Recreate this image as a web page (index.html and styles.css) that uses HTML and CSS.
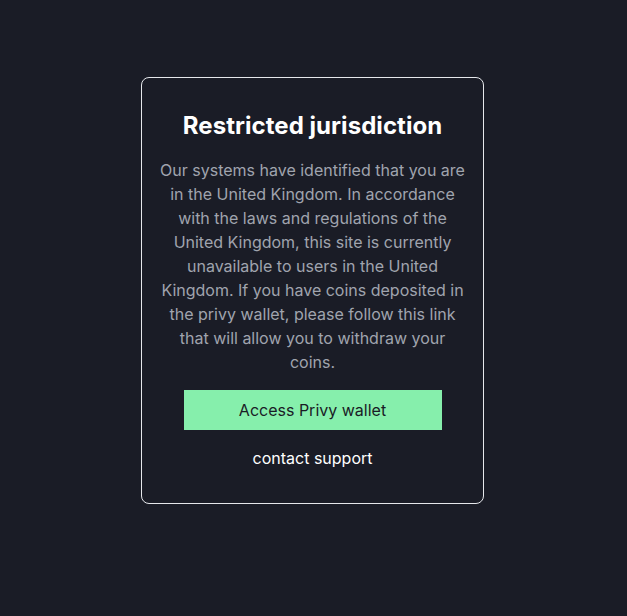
FILE: index.html
```html
<!DOCTYPE html>
<html lang="en">
<head>
<meta charset="utf-8">
<title>Restricted jurisdiction</title>
<link rel="stylesheet" href="styles.css">
</head>
<body>
<main class="page">
  <section class="card">
    <h1 class="title">Restricted jurisdiction</h1>
    <p class="message">Our systems have identified that you are in the United Kingdom. In accordance with the laws and regulations of the United Kingdom, this site is currently unavailable to users in the United Kingdom. If you have coins deposited in the privy wallet, please follow this link that will allow you to withdraw your coins.</p>
    <a class="btn" href="#">Access Privy wallet</a>
    <a class="support" href="#">contact support</a>
  </section>
</main>
</body>
</html>
```

FILE: styles.css
```css
* { box-sizing: border-box; }
html, body {
  margin: 0;
  padding: 0;
  background: #1a1c26;
  font-family: Inter, "Noto Sans", sans-serif;
}
.page {
  min-height: 616px;
  display: flex;
  justify-content: center;
  align-items: flex-start;
  padding-top: 77px;
  padding-right: 2px;
}
.card {
  width: 343px;
  border: 1px solid #e5e7eb;
  border-radius: 8px;
  padding: 32px 16px 33px;
  display: flex;
  flex-direction: column;
  align-items: center;
  gap: 16px;
  text-align: center;
}
.title {
  margin: 0;
  font-size: 24px;
  line-height: 32px;
  font-weight: 700;
  letter-spacing: 0.05px;
  color: #ffffff;
}
.message {
  margin: 0;
  font-size: 16px;
  line-height: 24px;
  color: #a0a4ae;
}
.btn {
  display: block;
  width: 258px;
  height: 40px;
  line-height: 40px;
  background: #86efac;
  color: #1a1c26;
  font-size: 16px;
  text-decoration: none;
}
.support {
  display: block;
  font-size: 16px;
  line-height: 24px;
  color: #ffffff;
  font-weight: 400;
  text-decoration: none;
}
```
